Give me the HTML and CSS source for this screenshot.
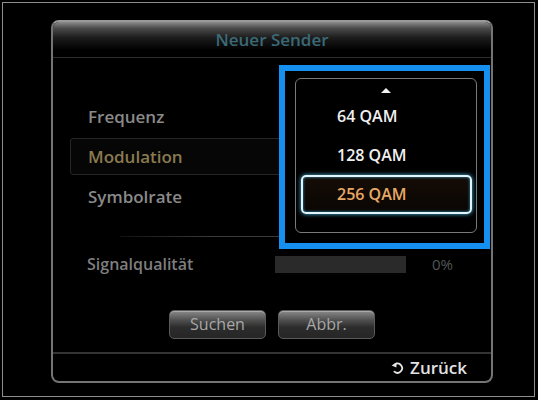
FILE: index.html
```html
<!DOCTYPE html>
<html lang="de">
<head>
<meta charset="utf-8">
<title>Neuer Sender</title>
<link rel="stylesheet" href="styles.css">
</head>
<body>
<div class="screen">
  <div class="dialog">
    <div class="title">Neuer Sender</div>
    <div class="content">
      <div class="row">Frequenz</div>
      <div class="row row-active">Modulation</div>
      <div class="row">Symbolrate</div>
      <div class="divider"></div>
      <div class="signal">
        <span class="signal-label">Signalqualität</span>
        <span class="signal-bar"></span>
        <span class="signal-value">0%</span>
      </div>
      <div class="buttons">
        <span class="btn">Suchen</span>
        <span class="btn">Abbr.</span>
      </div>
    </div>
    <div class="footer">
      <svg class="back-icon" width="13" height="13" viewBox="0 0 13 13">
        <path d="M4.2 3.2 A4.6 4.6 0 1 1 3.4 10.6" fill="none" stroke="#e6e6e6" stroke-width="1.8" stroke-linecap="round"/>
        <polygon points="0.6,4.6 5.6,1.2 5.4,6.6" fill="#e6e6e6"/>
      </svg>
      <span class="back-text">Zurück</span>
    </div>
    <div class="highlight">
      <div class="dropdown">
        <div class="arrow-up"></div>
        <div class="item">64 QAM</div>
        <div class="item">128 QAM</div>
        <div class="item item-selected">256 QAM</div>
      </div>
    </div>
  </div>
</div>
</body>
</html>
```

FILE: styles.css
```css
html, body {
  margin: 0;
  padding: 0;
  background: #000;
}
body {
  width: 538px;
  height: 400px;
  overflow: hidden;
  font-family: "Open Sans", "DejaVu Sans", sans-serif;
}
.screen {
  box-sizing: border-box;
  width: 533px;
  height: 395px;
  margin: 2px 0 0 2px;
  border: 1px solid #8e8e8e;
  background: #000;
  padding: 17px 0 0 48px;
}
.dialog {
  position: relative;
  box-sizing: border-box;
  width: 442px;
  height: 363px;
  border: 2px solid #747474;
  border-top-color: #9a9a9a;
  border-radius: 8px;
  background: #000;
  display: flex;
  flex-direction: column;
}
.title {
  height: 35px;
  border-bottom: 1px solid #2c2c2c;
  border-radius: 6px 6px 0 0;
  background: linear-gradient(#8c8c8c 0, #4a4a4a 18%, #1c1c1c 45%, #000 80%);
  color: #3b6a77;
  font-size: 17px;
  font-weight: 600;
  text-align: center;
  line-height: 36px;
}
.content {
  flex: 1;
  padding-top: 40px;
  display: flex;
  flex-direction: column;
}
.row {
  box-sizing: border-box;
  height: 37px;
  margin: 0 17px 3px 17px;
  padding-left: 17px;
  border: 1px solid transparent;
  color: #8a8a8a;
  font-size: 17px;
  font-weight: 600;
  line-height: 35px;
}
.row-active {
  border-color: #262626;
  border-radius: 3px;
  background: #060606;
  color: #8a7a50;
}
.divider {
  height: 1px;
  width: 300px;
  margin: 18px 0 0 67px;
  background: linear-gradient(90deg, #111, #3a3a3a 30%, #3a3a3a 70%, #111);
}
.signal {
  display: flex;
  align-items: center;
  height: 20px;
  margin-top: 17px;
  padding-left: 34px;
}
.signal-label {
  width: 188px;
  color: #7e7e7e;
  font-size: 16px;
  font-weight: 600;
}
.signal-bar {
  width: 131px;
  height: 17px;
  background: #2a2a2a;
}
.signal-value {
  margin-left: 26px;
  color: #555;
  font-size: 15px;
}
.buttons {
  display: flex;
  justify-content: center;
  gap: 12px;
  margin-top: 36px;
}
.btn {
  box-sizing: border-box;
  width: 97px;
  height: 29px;
  border: 1px solid #5a5a5a;
  border-radius: 5px;
  background: linear-gradient(#8a8a8a 0, #4e4e4e 35%, #2c2c2c 60%, #262626 100%);
  box-shadow: inset 0 1px 0 #aaa;
  color: #a8a8a8;
  font-size: 16px;
  text-align: center;
  line-height: 27px;
}
.footer {
  height: 27px;
  border-top: 2px solid #343434;
  display: flex;
  align-items: center;
  justify-content: flex-end;
  padding-right: 24px;
  gap: 6px;
}
.back-icon {
  display: block;
}
.back-text {
  color: #e2e2e2;
  font-size: 17px;
  font-weight: 600;
}
.highlight {
  position: absolute;
  left: 226px;
  top: 43px;
  box-sizing: border-box;
  width: 211px;
  height: 184px;
  border: 6px solid #1590ee;
  background: #000;
  padding: 7px 0 0 10px;
}
.dropdown {
  box-sizing: border-box;
  width: 182px;
  height: 155px;
  border: 1px solid #7a7a7a;
  border-radius: 6px;
  display: flex;
  flex-direction: column;
  align-items: flex-start;
}
.arrow-up {
  align-self: center;
  width: 0;
  height: 0;
  margin-top: 9px;
  margin-bottom: 4px;
  border-left: 5px solid transparent;
  border-right: 5px solid transparent;
  border-bottom: 5px solid #f2f2f2;
}
.item {
  box-sizing: border-box;
  width: 171px;
  height: 39px;
  margin-left: 5px;
  padding-left: 34px;
  border: 2px solid transparent;
  border-radius: 5px;
  color: #f0f0f0;
  font-size: 16px;
  font-weight: 600;
  line-height: 35px;
}
.item-selected {
  border-color: #dff6ff;
  background: linear-gradient(#150c06, #0a0603);
  box-shadow: 0 0 4px #4bbbe6, inset 0 0 3px #3aa3d0;
  color: #e8a865;
}
```
